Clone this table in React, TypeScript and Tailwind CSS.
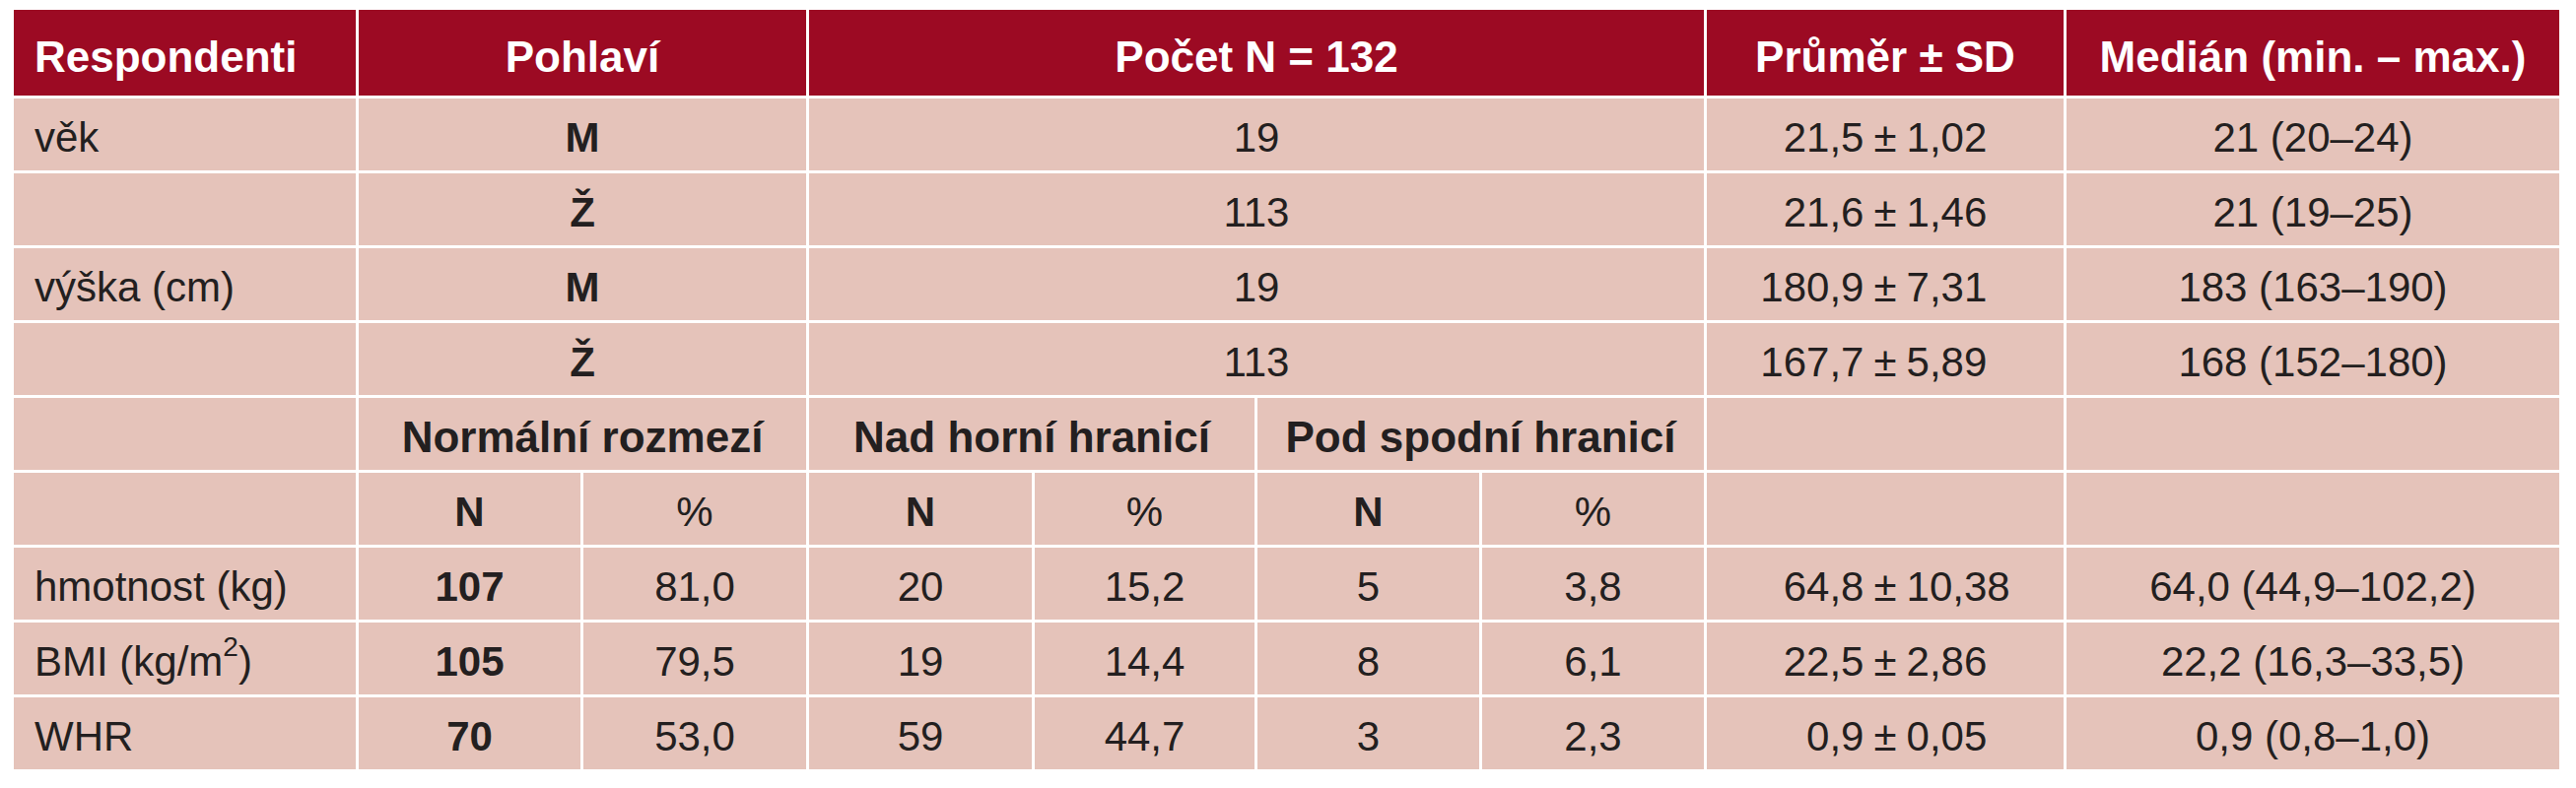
import React from 'react';

const font = { fontFamily: '"Liberation Sans", Arial, sans-serif' };

type Cell = {
  text?: React.ReactNode;
  span?: number;
  bold?: boolean;
  left?: boolean;
  big?: boolean;
};

function Td({ text, span = 1, bold, left, big }: Cell) {
  const spanCls =
    span === 2 ? 'col-span-2' : span === 4 ? 'col-span-4' : span === 1 ? 'col-span-1' : '';
  return (
    <div
      className={`${spanCls} flex items-center bg-[#e5c3ba] pt-[6px] text-[#231f20] ${
        big ? 'text-[44px]' : 'text-[42px]'
      } ${bold ? 'font-bold' : 'font-normal'} ${left ? 'justify-start pl-[21px]' : 'justify-center'}`}
    >
      {text}
    </div>
  );
}

function Th({ text, span = 1, left }: Cell) {
  const spanCls = span === 2 ? 'col-span-2' : span === 4 ? 'col-span-4' : 'col-span-1';
  return (
    <div
      className={`${spanCls} flex items-center bg-[#9c0a23] pt-[8px] text-[44px] font-bold text-white ${
        left ? 'justify-start pl-[21px]' : 'justify-center'
      }`}
    >
      {text}
    </div>
  );
}

// value aligned on the ± sign
function Mean({ a, b }: { a: string; b: string }) {
  return (
    <div className="grid w-full grid-cols-[1fr_auto_1fr]">
      <span className="text-right">{a}</span>
      <span className="px-[10px]">±</span>
      <span className="text-left">{b}</span>
    </div>
  );
}

const upper = [
  { label: 'věk', sex: 'M', n: '19', mean: ['21,5', '1,02'], med: '21 (20–24)' },
  { label: '', sex: 'Ž', n: '113', mean: ['21,6', '1,46'], med: '21 (19–25)' },
  { label: 'výška (cm)', sex: 'M', n: '19', mean: ['180,9', '7,31'], med: '183 (163–190)' },
  { label: '', sex: 'Ž', n: '113', mean: ['167,7', '5,89'], med: '168 (152–180)' },
];

const lower = [
  {
    label: 'hmotnost (kg)',
    vals: ['107', '81,0', '20', '15,2', '5', '3,8'],
    mean: ['64,8', '10,38'],
    med: '64,0 (44,9–102,2)',
  },
  {
    label: (
      <>
        BMI (kg/m<sup className="top-[-15px] text-[28px]">2</sup>)
      </>
    ),
    vals: ['105', '79,5', '19', '14,4', '8', '6,1'],
    mean: ['22,5', '2,86'],
    med: '22,2 (16,3–33,5)',
  },
  {
    label: 'WHR',
    vals: ['70', '53,0', '59', '44,7', '3', '2,3'],
    mean: ['0,9', '0,05'],
    med: '0,9 (0,8–1,0)',
  },
];

export default function App() {
  return (
    <div className="min-h-screen bg-white pl-[14px] pt-[10px]" style={font}>
      <div className="grid w-[2583px] grid-cols-[347px_225px_226px_226px_223px_225px_225px_362px_500px] grid-rows-[87px_repeat(9,73px)] gap-[3px] bg-white">
        {/* Header */}
        <Th text="Respondenti" left />
        <Th text="Pohlaví" span={2} />
        <Th text="Počet N = 132" span={4} />
        <Th text="Průměr ± SD" />
        <Th text="Medián (min. – max.)" />

        {/* Age / height */}
        {upper.map((r, i) => (
          <React.Fragment key={i}>
            <Td text={r.label} left />
            <Td text={r.sex} span={2} bold />
            <Td text={r.n} span={4} />
            <Td text={<Mean a={r.mean[0]} b={r.mean[1]} />} />
            <Td text={r.med} />
          </React.Fragment>
        ))}

        {/* Sub header */}
        <Td />
        <Td text="Normální rozmezí" span={2} bold big />
        <Td text="Nad horní hranicí" span={2} bold big />
        <Td text="Pod spodní hranicí" span={2} bold big />
        <Td />
        <Td />

        <Td />
        <Td text="N" bold />
        <Td text="%" />
        <Td text="N" bold />
        <Td text="%" />
        <Td text="N" bold />
        <Td text="%" />
        <Td />
        <Td />

        {lower.map((r, i) => (
          <React.Fragment key={i}>
            <Td text={r.label} left />
            {r.vals.map((v, j) => (
              <Td key={j} text={v} bold={j === 0} />
            ))}
            <Td text={<Mean a={r.mean[0]} b={r.mean[1]} />} />
            <Td text={r.med} />
          </React.Fragment>
        ))}
      </div>
    </div>
  );
}
